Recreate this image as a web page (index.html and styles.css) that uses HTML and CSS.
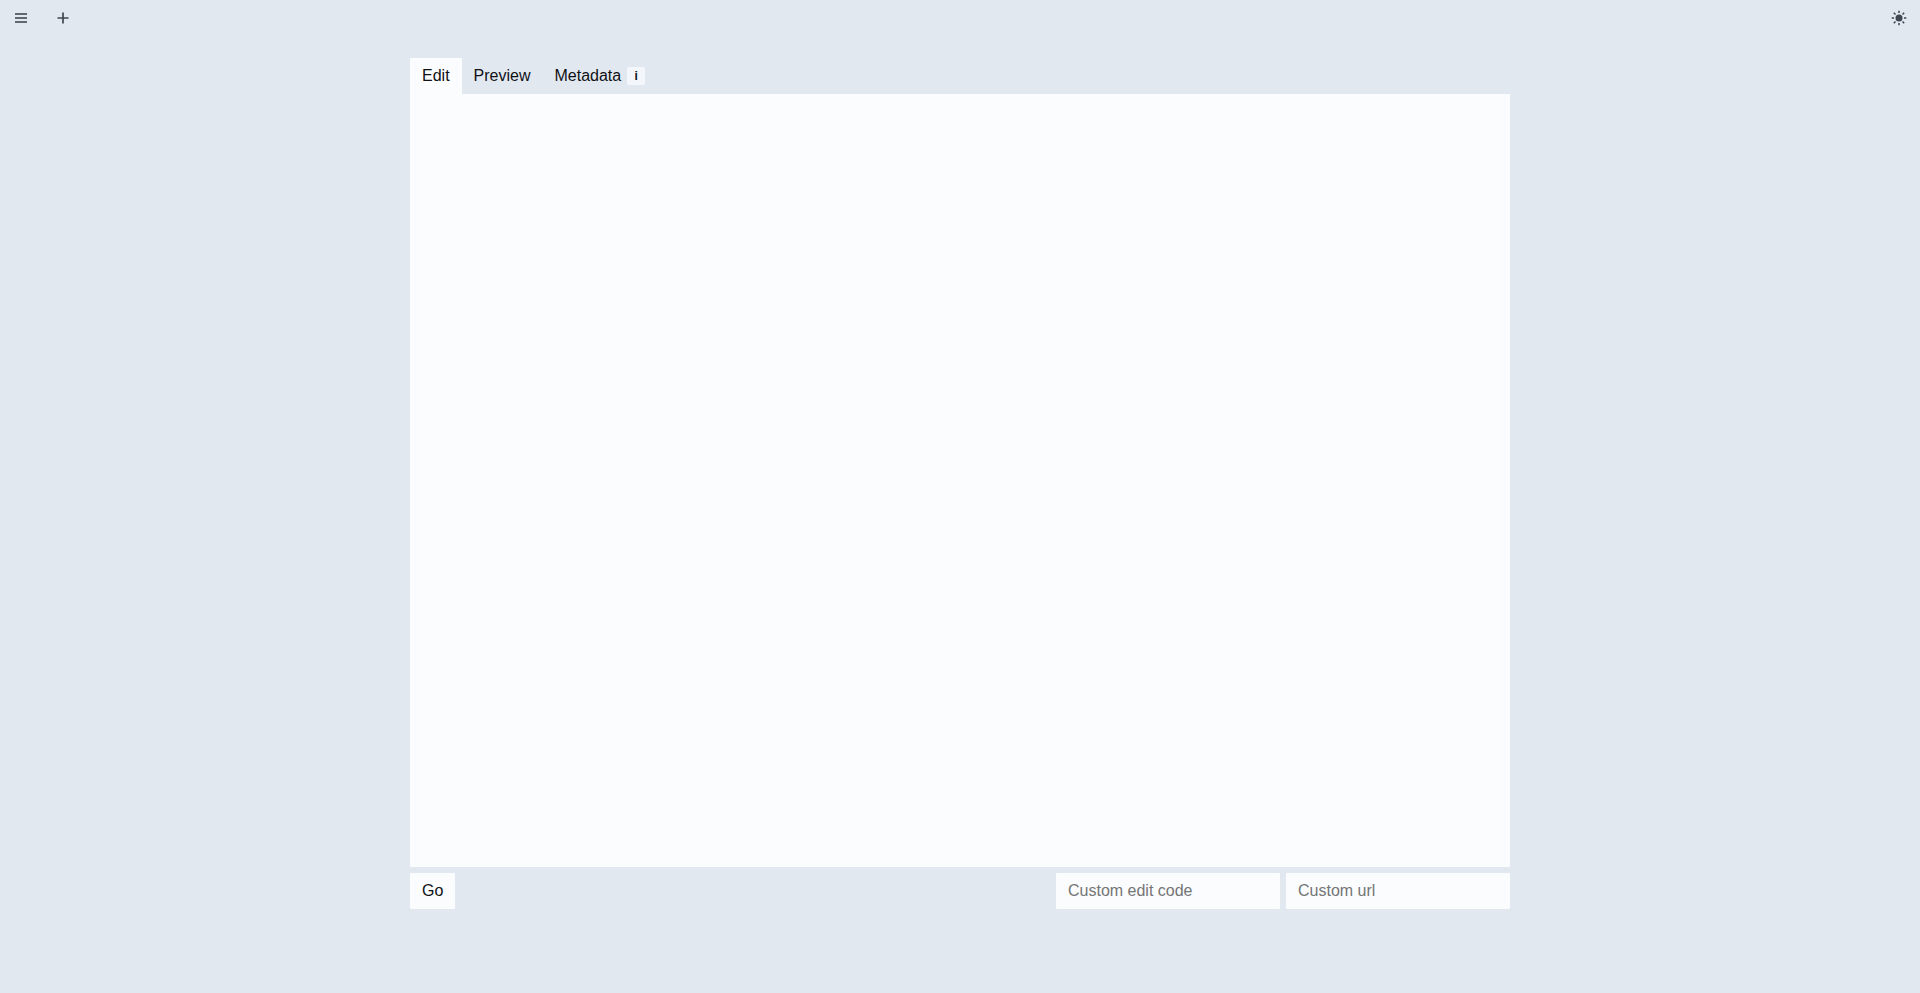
FILE: index.html
```
<!DOCTYPE html>
<html lang="en">
<head>
<meta charset="utf-8">
<meta name="viewport" content="width=device-width, initial-scale=1">
<title>New paste</title>
<link rel="stylesheet" href="styles.css">
</head>
<body>
<header class="topbar">
  <nav class="topbar-group">
    <button class="icon-button" type="button" aria-label="Menu">
      <svg class="icon icon-menu" viewBox="0 0 18 18" fill="currentColor" aria-hidden="true"><path d="M3 4h12v2H3zM3 8h12v2H3zM3 12h12v2H3z"/></svg>
    </button>
    <button class="icon-button" type="button" aria-label="New">
      <svg class="icon" viewBox="0 0 18 18" fill="none" stroke="currentColor" stroke-width="1.7" aria-hidden="true"><path d="M9 3.5v11M3.5 9h11"/></svg>
    </button>
  </nav>
  <button class="icon-button" type="button" aria-label="Toggle theme">
    <svg class="icon" viewBox="0 0 18 18" fill="none" stroke="currentColor" stroke-width="1.5" aria-hidden="true"><circle cx="9" cy="9" r="3.5" fill="currentColor" stroke="none"/><path d="M9 1.7v2.3M9 14v2.3M1.7 9H4M14 9h2.3M3.8 3.8l1.7 1.7M12.5 12.5l1.7 1.7M3.8 14.2l1.7-1.7M12.5 5.5l1.7-1.7"/></svg>
  </button>
</header>
<main class="page">
  <form class="editor">
    <div class="tabs">
      <button class="tab tab-active" type="button">Edit</button>
      <button class="tab" type="button">Preview</button>
      <button class="tab" type="button">Metadata</button>
      <button class="info" type="button" aria-label="About metadata">i</button>
    </div>
    <textarea class="text" aria-label="Text"></textarea>
    <div class="actions">
      <button class="submit" type="submit">Go</button>
      <div class="fields">
        <input class="field" type="text" placeholder="Custom edit code" aria-label="Custom edit code">
        <input class="field" type="text" placeholder="Custom url" aria-label="Custom url">
      </div>
    </div>
  </form>
</main>
</body>
</html>
```
FILE: styles.css
```
* {
  box-sizing: border-box;
}

body {
  display: flex;
  flex-direction: column;
  min-height: 100vh;
  margin: 0;
  background: #e2e8f0;
  color: #0f1115;
  font: 16px/20px "Liberation Sans", Arial, sans-serif;
}

button,
input,
textarea {
  margin: 0;
  border: 0;
  border-radius: 0;
  color: inherit;
  font: inherit;
}

.topbar {
  display: flex;
  justify-content: space-between;
}

.topbar-group {
  display: flex;
}

.icon-button {
  display: flex;
  padding: 9px 12px;
  background: none;
  color: #404550;
}

.icon {
  width: 18px;
  height: 18px;
}

.icon-menu {
  color: #626772;
}

.page {
  display: flex;
  flex: 1;
  justify-content: center;
  padding: 22px 16px 84px;
}

.editor {
  display: flex;
  flex: 1;
  flex-direction: column;
  max-width: 1100px;
}

.tabs {
  display: flex;
  align-items: center;
}

.tab {
  padding: 8px 12px;
  background: none;
}

.tab-active,
.text,
.submit,
.field {
  background: #fafcfe;
}

.tab-active {
  border-radius: 1px 1px 0 0;
}

.info {
  margin-left: -6px;
  width: 18px;
  padding: 0;
  border-radius: 1px;
  background: #f3f6fa;
  font-size: 12px;
  font-weight: bold;
  line-height: 18px;
}

.text {
  flex: 1;
  width: 100%;
  padding: 12px;
  resize: none;
}

.actions {
  display: flex;
  flex-wrap: wrap;
  justify-content: space-between;
  gap: 6px;
  margin-top: 6px;
}

.submit,
.field {
  padding: 8px 12px;
  border-radius: 1px;
}

.fields {
  display: flex;
  flex-wrap: wrap;
  gap: 6px;
}

.field {
  width: 224px;
  height: 36px;
}

.field::placeholder {
  color: #757575;
}
```
